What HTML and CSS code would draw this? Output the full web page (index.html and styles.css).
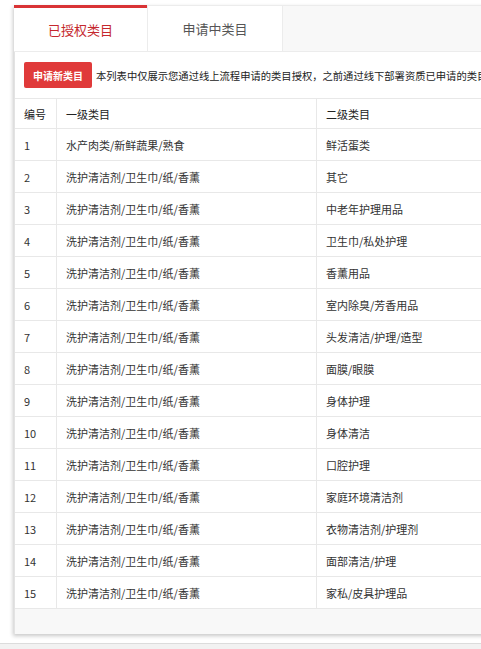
FILE: index.html
```html
<!DOCTYPE html>
<html lang="zh-CN">
<head>
    <meta charset="UTF-8">
    <meta name="viewport" content="width=device-width, initial-scale=1.0">
    <title>类目管理</title>
    <link rel="stylesheet" href="styles.css">
</head>
<body>
    <div class="page">
        <div class="card">
            <div class="tabs">
                <a class="tab active" href="#authorized">已授权类目</a>
                <a class="tab" href="#pending">申请中类目</a>
            </div>

            <div class="panel">
                <div class="toolbar">
                    <button class="btn-red">申请新类目</button>
                    <span class="tip">本列表中仅展示您通过线上流程申请的类目授权，之前通过线下部署资质已申请的类目暂不在此处展示</span>
                </div>

                <table class="grid">
                    <thead>
                        <tr><th class="col-no">编号</th><th class="col-one">一级类目</th><th>二级类目</th></tr>
                    </thead>
                    <tbody>
                        <tr><td>1</td><td>水产肉类/新鲜蔬果/熟食</td><td>鲜活蛋类</td></tr>
                        <tr><td>2</td><td>洗护清洁剂/卫生巾/纸/香薰</td><td>其它</td></tr>
                        <tr><td>3</td><td>洗护清洁剂/卫生巾/纸/香薰</td><td>中老年护理用品</td></tr>
                        <tr><td>4</td><td>洗护清洁剂/卫生巾/纸/香薰</td><td>卫生巾/私处护理</td></tr>
                        <tr><td>5</td><td>洗护清洁剂/卫生巾/纸/香薰</td><td>香薰用品</td></tr>
                        <tr><td>6</td><td>洗护清洁剂/卫生巾/纸/香薰</td><td>室内除臭/芳香用品</td></tr>
                        <tr><td>7</td><td>洗护清洁剂/卫生巾/纸/香薰</td><td>头发清洁/护理/造型</td></tr>
                        <tr><td>8</td><td>洗护清洁剂/卫生巾/纸/香薰</td><td>面膜/眼膜</td></tr>
                        <tr><td>9</td><td>洗护清洁剂/卫生巾/纸/香薰</td><td>身体护理</td></tr>
                        <tr><td>10</td><td>洗护清洁剂/卫生巾/纸/香薰</td><td>身体清洁</td></tr>
                        <tr><td>11</td><td>洗护清洁剂/卫生巾/纸/香薰</td><td>口腔护理</td></tr>
                        <tr><td>12</td><td>洗护清洁剂/卫生巾/纸/香薰</td><td>家庭环境清洁剂</td></tr>
                        <tr><td>13</td><td>洗护清洁剂/卫生巾/纸/香薰</td><td>衣物清洁剂/护理剂</td></tr>
                        <tr><td>14</td><td>洗护清洁剂/卫生巾/纸/香薰</td><td>面部清洁/护理</td></tr>
                        <tr><td>15</td><td>洗护清洁剂/卫生巾/纸/香薰</td><td>家私/皮具护理品</td></tr>
                    </tbody>
                </table>

                <div class="panel-foot"></div>
            </div>
        </div>
    </div>
    <div class="bottom-bar"></div>
</body>
</html>
```

FILE: styles.css
```css
html, body {
    margin: 0;
    background-color: #fff;
    font-family: "Noto Sans CJK SC", "Noto Sans", sans-serif;
    color: #333;
    overflow: hidden;
}

.page {
    padding: 5px 0 0 14px;
    height: 638px;
}

.card {
    width: 720px;
    box-shadow: -1px 2px 4px rgba(0, 0, 0, 0.22);
}

/* tab bar */
.tabs {
    display: flex;
    height: 45px;
    background-color: #f8f8f8;
    border-top: 1px solid #ececec;
    border-bottom: 1px solid #ececec;
}

.tab {
    display: flex;
    align-items: center;
    justify-content: center;
    width: 133px;
    background-color: #fff;
    color: #555;
    font-size: 13px;
    text-decoration: none;
}

.tab.active {
    color: #c5282e;
    margin-top: -1px;
    border-top: 3px solid #d93335;
    padding-bottom: 1px;
}

.tab + .tab {
    width: 134px;
    border-left: 1px solid #ececec;
    border-right: 1px solid #ececec;
}

/* content */
.panel {
    background-color: #fff;
    border-left: 1px solid #e3e3e3;
    padding-top: 10px;
}

.toolbar {
    display: flex;
    align-items: center;
    gap: 4px;
    padding: 0 9px;
    margin-bottom: 10px;
    white-space: nowrap;
}

.btn-red {
    height: 26px;
    width: 68px;
    padding: 0;
    border: none;
    border-radius: 2px;
    background-color: #e03a3a;
    color: #fff;
    font-family: inherit;
    font-size: 10px;
    font-weight: bold;
}

.tip {
    font-size: 10.3px;
    color: #222;
}

.grid {
    width: 100%;
    border-collapse: collapse;
    font-size: 11px;
}

.grid th, .grid td {
    text-align: left;
    font-weight: normal;
    padding: 0 0 0 9px;
    border-top: 1px solid #e8e8e8;
    border-bottom: 1px solid #e8e8e8;
    border-left: 1px solid #e8e8e8;
    height: 31px;
}

.grid th {
    height: 29px;
    color: #222;
}

.grid th:first-child, .grid td:first-child {
    border-left: none;
}

.col-no {
    width: 32px;
}

.col-one {
    width: 250px;
}

.panel-foot {
    height: 25px;
    background-color: #f8f8f8;
}

.bottom-bar {
    height: 11px;
    border-top: 1px solid #dcdcdc;
    background-color: #f2f2f2;
}
```
